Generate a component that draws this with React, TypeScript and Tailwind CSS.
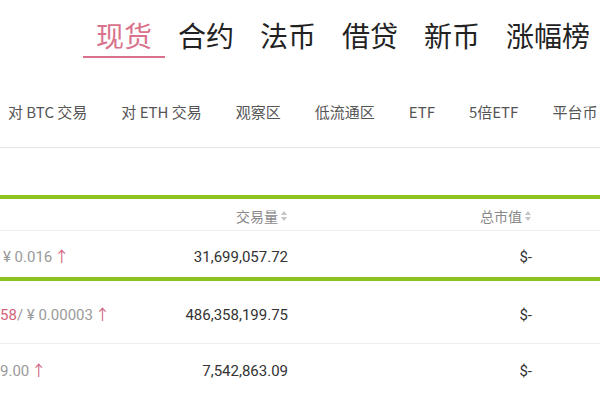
import React from 'react';

const cjk = { fontFamily: '"Noto Sans CJK SC", "Noto Sans", sans-serif' };
const num = { fontFamily: 'Roboto, "Noto Sans CJK SC", sans-serif' };

const tabs = ['现货', '合约', '法币', '借贷', '新币', '涨幅榜'];
const subTabs = ['对 BTC 交易', '对 ETH 交易', '观察区', '低流通区', 'ETF', '5倍ETF', '平台币'];

const SortIcon: React.FC = () => (
  <svg width="8" height="12" viewBox="0 0 8 12" className="ml-[2px] inline-block">
    <path d="M4 1 L7 5 L1 5 Z" fill="#c4c4c4" />
    <path d="M4 11 L7 7 L1 7 Z" fill="#c4c4c4" />
  </svg>
);

const Up: React.FC = () => <span className="ml-[2px] text-[#d3627e]">↑</span>;

const Divider: React.FC = () => <div className="h-[4px] w-full bg-[#8dc31f]" />;

export default function App() {
  return (
    <div className="relative h-[400px] w-[600px] overflow-hidden bg-white" style={cjk}>
      {/* top tabs */}
      <div className="flex h-[58px] whitespace-nowrap pl-[83px]">
        {tabs.map((t, i) => (
          <div key={t} className="flex shrink-0 flex-col items-center">
            <div
              className={`px-[13px] pt-[17px] text-[28px] leading-[36px] ${
                i === 0 ? 'text-[#d9738c]' : 'text-[#222]'
              }`}
            >
              {t}
            </div>
            <div className={`mt-[3px] h-[2px] w-full ${i === 0 ? 'bg-[#d9738c]' : 'bg-transparent'}`} />
          </div>
        ))}
      </div>

      {/* sub tabs */}
      <div className="flex h-[90px] gap-[34px] whitespace-nowrap border-b border-[#e6e6e6] pl-[8px] pt-[44px] text-[15px] leading-[20px] text-[#555]">
        {subTabs.map((t) => (
          <span key={t} className="shrink-0">{t}</span>
        ))}
      </div>

      <div className="h-[47px]" />
      <Divider />

      {/* header */}
      <div className="flex h-[32px] border-b border-[#eeeeee] pt-[2px] text-[14px] leading-[16px] text-[#888]">
        <div className="flex w-[288px] items-center justify-end">
          交易量
          <SortIcon />
        </div>
        <div className="flex w-[244px] items-center justify-end">
          总市值
          <SortIcon />
        </div>
      </div>

      {/* row 1 */}
      <div className="flex h-[46px] pt-[16px] text-[15px] leading-[20px]" style={num}>
        <div className="w-[140px] pl-[3px] text-[#9a9a9a]">
          ¥ 0.016
          <Up />
        </div>
        <div className="w-[148px] text-right text-[#333]">31,699,057.72</div>
        <div className="w-[244px] text-right text-[#333]">$-</div>
      </div>
      <Divider />

      {/* row 2 */}
      <div className="flex h-[63px] border-b border-[#eeeeee] pt-[24px] text-[15px] leading-[20px]" style={num}>
        <div className="w-[140px] whitespace-nowrap text-[#9a9a9a]">
          <span className="text-[#d3627e]">58</span>/ ¥ 0.00003
          <Up />
        </div>
        <div className="w-[148px] text-right text-[#333]">486,358,199.75</div>
        <div className="w-[244px] text-right text-[#333]">$-</div>
      </div>

      {/* row 3 */}
      <div className="flex h-[54px] pt-[17px] text-[15px] leading-[20px]" style={num}>
        <div className="w-[140px] text-[#9a9a9a]">
          9.00
          <Up />
        </div>
        <div className="w-[148px] text-right text-[#333]">7,542,863.09</div>
        <div className="w-[244px] text-right text-[#333]">$-</div>
      </div>
    </div>
  );
}
